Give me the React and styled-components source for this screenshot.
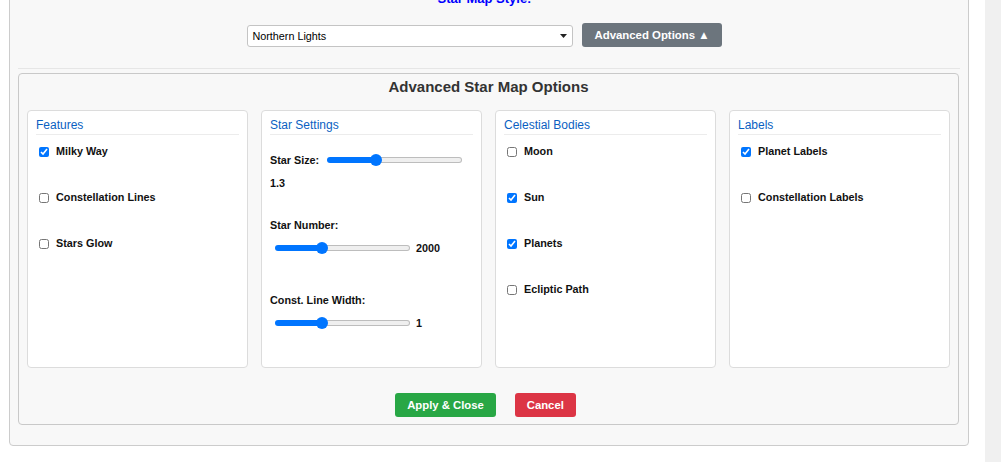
import React, { useState } from "react";
import styled, { createGlobalStyle } from "styled-components";

const Global = createGlobalStyle`
  html, body { margin: 0; padding: 0; background: #ffffff; }
  body { font-family: "Liberation Sans", Arial, sans-serif; color: #111; overflow: hidden; }
  * { box-sizing: border-box; }
`;

const Page = styled.div`
  display: flex;
  align-items: flex-start;
  min-height: 100vh;
`;

const Main = styled.div`
  flex: 1;
  min-width: 0;
`;

const ScrollTrack = styled.div`
  width: 16px;
  flex-shrink: 0;
  align-self: stretch;
  min-height: 100vh;
  background: #f0f0f0;
`;

const Container = styled.div`
  margin: -19px 16px 0 9px;
  border: 1px solid #cccccc;
  border-radius: 4px;
  background: #f8f8f8;
  padding: 9px 9px 9px 8px;
`;

const StyleTitle = styled.h3`
  margin: 0;
  padding-right: 8px;
  font-size: 13px;
  line-height: 16px;
  font-weight: bold;
  color: #0000ff;
  text-align: center;
`;

const Controls = styled.div`
  margin-top: 16px;
  display: flex;
  justify-content: center;
  align-items: flex-end;
  gap: 9px;
  padding-right: 8px;
`;

const Select = styled.select`
  appearance: none;
  -webkit-appearance: none;
  width: 326px;
  height: 22px;
  border: 1px solid #c4c4c4;
  border-radius: 3px;
  padding: 0 16px 0 4px;
  font-family: "Liberation Sans", Arial, sans-serif;
  font-size: 10.8px;
  color: #000;
  background: #fff url("data:image/svg+xml;utf8,<svg xmlns='http://www.w3.org/2000/svg' width='7' height='4' viewBox='0 0 7 4'><path d='M0 0 L7 0 L3.5 4 Z' fill='%23222'/></svg>") no-repeat right 5px center;
`;

const Button = styled.button`
  height: 24px;
  padding: 0 12px;
  border: none;
  border-radius: 3px;
  background: ${(p) => p.$bg};
  color: #fff;
  font-family: "Liberation Sans", Arial, sans-serif;
  font-size: ${(p) => p.$size || "11.3px"};
  font-weight: bold;
  cursor: pointer;
  white-space: nowrap;
`;

const Divider = styled.hr`
  margin: 21px -1px 0 0;
  border: none;
  border-top: 1px solid #e6e6e6;
  height: 0;
`;

const Panel = styled.div`
  margin: 4px 0 11px;
  border: 1px solid #c9c9c9;
  border-radius: 4px;
  background: #f8f8f8;
  padding: 4px 8px 7px;
`;

const PanelTitle = styled.h2`
  margin: 0 0 14px;
  font-size: 15px;
  line-height: 18px;
  font-weight: bold;
  color: #333;
  text-align: center;
`;

const Cards = styled.div`
  display: grid;
  grid-template-columns: repeat(4, 1fr);
  gap: 13px;
`;

const Card = styled.div`
  height: 258px;
  background: #fff;
  border: 1px solid #dcdcdc;
  border-radius: 4px;
  padding: 7px 8px 8px;
`;

const CardTitle = styled.h4`
  margin: 0;
  padding-bottom: 2px;
  border-bottom: 1px solid #ececec;
  font-size: 12px;
  line-height: 14px;
  font-weight: normal;
  color: #0a5fc2;
`;

const CheckList = styled.div`
  margin-top: 9px;
  display: flex;
  flex-direction: column;
  gap: 32px;
`;

const CheckRow = styled.label`
  display: flex;
  align-items: flex-start;
  gap: 7px;
  font-size: 10.8px;
  line-height: 14px;
  font-weight: bold;
  color: #111;
  cursor: pointer;
`;

const Check = styled.input.attrs({ type: "checkbox" })`
  width: 10px;
  height: 10px;
  margin: 3px 0 0 3px;
  flex-shrink: 0;
  accent-color: #0075ff;
`;

const SettingGroup = styled.div`
  margin-top: ${(p) => p.$mt}px;
  display: flex;
  flex-wrap: wrap;
  align-items: center;
  column-gap: 3px;
  row-gap: 9px;
  font-size: 10.8px;
  line-height: 14px;
  font-weight: bold;
  color: #111;
`;

const SettingLabel = styled.span``;

const Value = styled.span``;

const Range = styled.input.attrs({ type: "range" })`
  -webkit-appearance: none;
  appearance: none;
  width: 135px;
  height: 12px;
  margin: 0 3px 0 5px;
  padding: 0;
  background: transparent;

  &::-webkit-slider-runnable-track {
    box-sizing: border-box;
    height: 6px;
    border-radius: 3px;
    border: 1px solid transparent;
    background:
      linear-gradient(to right, #0075ff ${(p) => p.$fill}px, transparent ${(p) => p.$fill}px) border-box,
      linear-gradient(#efefef, #efefef) padding-box,
      linear-gradient(#bdbdbd, #bdbdbd) border-box;
  }
  &::-webkit-slider-thumb {
    -webkit-appearance: none;
    width: 12px;
    height: 12px;
    border-radius: 50%;
    background: #0075ff;
    border: none;
    margin-top: -4px;
  }
`;

const ButtonRow = styled.div`
  margin-top: 25px;
  display: flex;
  justify-content: center;
  gap: 19px;
  padding-right: 6px;
`;

function Slider({ min, max, step, value, onChange }) {
  const frac = (value - min) / (max - min);
  const fill = 6 + frac * (135 - 12);
  return (
    <Range
      min={min}
      max={max}
      step={step}
      value={value}
      $fill={fill.toFixed(1)}
      onChange={(e) => onChange(parseFloat(e.target.value))}
    />
  );
}

function CheckCard({ title, items }) {
  return (
    <Card>
      <CardTitle>{title}</CardTitle>
      <CheckList>
        {items.map(([label, checked]) => (
          <CheckRow key={label}>
            <Check defaultChecked={checked} />
            {label}
          </CheckRow>
        ))}
      </CheckList>
    </Card>
  );
}

export default function App() {
  const [size, setSize] = useState(1.3);
  const [count, setCount] = useState(2000);
  const [lineW, setLineW] = useState(1);

  return (
    <Page>
      <Global />
      <Main>
        <Container>
          <StyleTitle>Star Map Style:</StyleTitle>
          <Controls>
            <Select defaultValue="northern">
              <option value="classic">Classic</option>
              <option value="northern">Northern Lights</option>
              <option value="midnight">Midnight Blue</option>
            </Select>
            <Button $bg="#6c757d" $size="11.4px">Advanced Options ▲</Button>
          </Controls>
          <Divider />
          <Panel>
            <PanelTitle>Advanced Star Map Options</PanelTitle>
            <Cards>
              <CheckCard
                title="Features"
                items={[
                  ["Milky Way", true],
                  ["Constellation Lines", false],
                  ["Stars Glow", false],
                ]}
              />
              <Card>
                <CardTitle>Star Settings</CardTitle>
                <SettingGroup $mt={18}>
                  <SettingLabel>Star Size:</SettingLabel>
                  <Slider min={0.5} max={2.8} step={0.1} value={size} onChange={setSize} />
                  <Value>{size.toFixed(1)}</Value>
                </SettingGroup>
                <SettingGroup $mt={28}>
                  <SettingLabel>Star Number:</SettingLabel>
                  <Slider min={500} max={5000} step={100} value={count} onChange={setCount} />
                  <Value>{count}</Value>
                </SettingGroup>
                <SettingGroup $mt={38}>
                  <SettingLabel>Const. Line Width:</SettingLabel>
                  <Slider min={0.5} max={2} step={0.5} value={lineW} onChange={setLineW} />
                  <Value>{lineW}</Value>
                </SettingGroup>
              </Card>
              <CheckCard
                title="Celestial Bodies"
                items={[
                  ["Moon", false],
                  ["Sun", true],
                  ["Planets", true],
                  ["Ecliptic Path", false],
                ]}
              />
              <CheckCard
                title="Labels"
                items={[
                  ["Planet Labels", true],
                  ["Constellation Labels", false],
                ]}
              />
            </Cards>
            <ButtonRow>
              <Button $bg="#28a745">Apply &amp; Close</Button>
              <Button $bg="#dc3545">Cancel</Button>
            </ButtonRow>
          </Panel>
        </Container>
      </Main>
      <ScrollTrack />
    </Page>
  );
}
